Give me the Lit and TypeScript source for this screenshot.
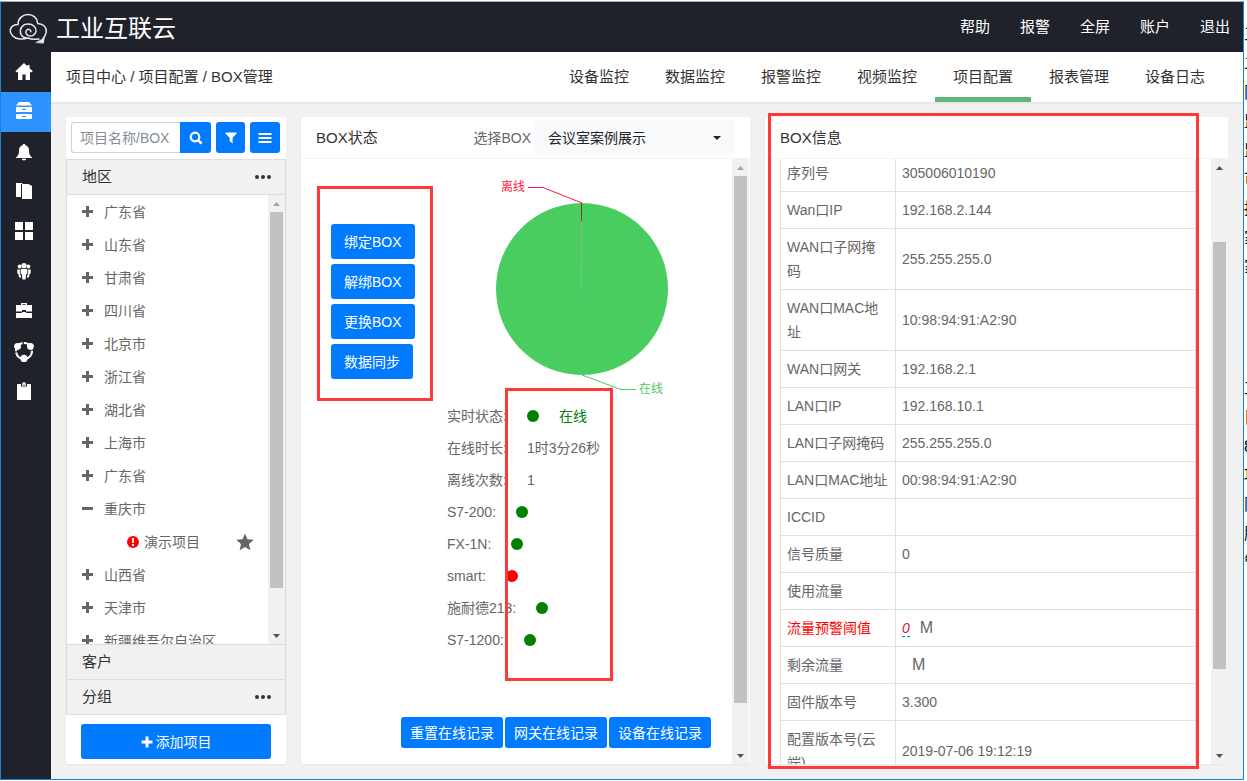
import { LitElement, html, svg, css, nothing } from "lit";
import { customElement, property } from "lit/decorators.js";
import { classMap } from "lit/directives/class-map.js";
import { styleMap } from "lit/directives/style-map.js";

const glyphs = {
  home: svg`<path d="M10 1 L1.4 9.2 L3 10.4 L4 9.8 V18 H8.4 V12.4 H11.6 V18 H16 V9.8 L17 10.4 L18.8 9.2 L15.6 6.2 V3 H13.4 V4.2 Z"/>`,
  cabinet: svg`<path d="M5 0 H15 L18 3.4 H2 Z"/><path fill-rule="evenodd" d="M2 5 H18 V10 H2 Z M8 7 V8 H12 V7 Z M2 12 H18 V17 H2 Z M8 14 V15 H12 V14 Z"/>`,
  bell: svg`<path d="M10 2 C10.9 2 11.4 2.6 11.4 3.3 C14 4 15 6.1 15 8.6 C15 12.5 16 14 18 15.4 V16 H2 V15.4 C4 14 5 12.5 5 8.6 C5 6.1 6 4 8.6 3.3 C8.6 2.6 9.1 2 10 2 Z M7.6 16.8 H12.4 C12 18 11 18.4 10 18.4 C9 18.4 8 18 7.6 16.8 Z"/>`,
  copy: svg`<path d="M2 1 H8.4 V2 H7 V15 H2 Z"/><path d="M8 2 H14.4 L18 4 V17 H8 Z"/>`,
  grid: svg`<path d="M1 0 H9 V8 H1 Z M11 0 H19 V8 H11 Z M1 10 H9 V18 H1 Z M11 10 H19 V18 H11 Z"/>`,
  users: svg`<circle cx="5.6" cy="4.6" r="2"/><circle cx="14.4" cy="4.6" r="2"/><circle cx="10" cy="3.6" r="2.6"/><path d="M6.6 7.4 C8 6.6 12 6.6 13.4 7.4 L13.2 12 L12 12.6 L11.6 17.4 H8.4 L8 12.6 L6.8 12 Z"/><path d="M3.2 7.6 L5.8 7.4 L6 12.4 L7 13.4 L7.2 15.6 H5 L4.4 12 L3.4 11.4 Z M16.8 7.6 L14.2 7.4 L14 12.4 L13 13.4 L12.8 15.6 H15 L15.6 12 L16.6 11.4 Z"/>`,
  briefcase: svg`<path fill-rule="evenodd" d="M7 1 H13 V3 H18 V9.4 H12 V8 H8 V9.4 H2 V3 H7 Z M8.4 2.2 V3 H11.6 V2.2 Z"/><path d="M2 11 H8 V10 H12 V11 H18 V16 H2 Z"/>`,
  team: svg`<circle cx="10" cy="9" r="8" fill="none" stroke="#fff" stroke-width="2.2" stroke-dasharray="11 1.4"/><circle cx="3.6" cy="4.4" r="3.3"/><circle cx="16.4" cy="4.4" r="3.3"/><circle cx="10" cy="16.4" r="3.6"/><path d="M0 3.4 H7 L5 7.4 H1.4 Z M20 3.4 H13 L15 7.4 H18.6 Z"/>`,
  clipboard: svg`<path fill-rule="evenodd" d="M3 2 H7 V4.6 H13 V2 H17 V18 H3 Z"/><path fill-rule="evenodd" d="M8 1.4 L10 0 L12 1.4 V3.8 H8 Z M9.4 1.8 V2.8 H10.6 V1.8 Z"/>`,
};

const sideItems: { icon: keyof typeof glyphs; label: string; active?: boolean }[] = [
  { icon: "home", label: "首页" },
  { icon: "cabinet", label: "项目中心", active: true },
  { icon: "bell", label: "报警" },
  { icon: "copy", label: "文档" },
  { icon: "grid", label: "应用" },
  { icon: "users", label: "用户" },
  { icon: "briefcase", label: "业务" },
  { icon: "team", label: "团队" },
  { icon: "clipboard", label: "记录" },
];

const tabs = ["设备监控", "数据监控", "报警监控", "视频监控", "项目配置", "报表管理", "设备日志"];

const regions: { name: string; open?: boolean; projects?: string[] }[] = [
  { name: "广东省" },
  { name: "山东省" },
  { name: "甘肃省" },
  { name: "四川省" },
  { name: "北京市" },
  { name: "浙江省" },
  { name: "湖北省" },
  { name: "上海市" },
  { name: "广东省" },
  { name: "重庆市", open: true, projects: ["演示项目"] },
  { name: "山西省" },
  { name: "天津市" },
  { name: "新疆维吾尔自治区" },
];

const statuses: { label: string; dot?: "ok" | "bad"; value?: string; good?: boolean }[] = [
  { label: "实时状态:", dot: "ok", value: "在线", good: true },
  { label: "在线时长:", value: "1时3分26秒" },
  { label: "离线次数:", value: "1" },
  { label: "S7-200:", dot: "ok" },
  { label: "FX-1N:", dot: "ok" },
  { label: "smart:", dot: "bad" },
  { label: "施耐德213:", dot: "ok" },
  { label: "S7-1200:", dot: "ok" },
];

const info: { name: string; value?: string; unit?: string; alert?: boolean }[] = [
  { name: "序列号", value: "305006010190" },
  { name: "Wan口IP", value: "192.168.2.144" },
  { name: "WAN口子网掩码", value: "255.255.255.0" },
  { name: "WAN口MAC地址", value: "10:98:94:91:A2:90" },
  { name: "WAN口网关", value: "192.168.2.1" },
  { name: "LAN口IP", value: "192.168.10.1" },
  { name: "LAN口子网掩码", value: "255.255.255.0" },
  { name: "LAN口MAC地址", value: "00:98:94:91:A2:90" },
  { name: "ICCID" },
  { name: "信号质量", value: "0" },
  { name: "使用流量" },
  { name: "流量预警阈值", value: "0", unit: "M", alert: true },
  { name: "剩余流量", unit: "M" },
  { name: "固件版本号", value: "3.300" },
  { name: "配置版本号(云端)", value: "2019-07-06 19:12:19" },
];

const shared = css`
  * { box-sizing: border-box; }
  button, input, select { font: inherit; margin: 0; }
  button { border: 0; padding: 0; background: none; color: inherit; cursor: pointer; }
  svg { display: block; }
  .card {
    background: #fff;
    border-radius: 2px;
    box-shadow: 0 1px 2px rgba(0, 0, 0, 0.05);
    display: flex;
    flex-direction: column;
    min-height: 0;
    min-width: 0;
    height: 100%;
  }
  .card-head {
    display: flex;
    align-items: center;
    height: 42px;
    flex: none;
    padding: 0 15px;
    border-bottom: 1px solid #f3f3f3;
    font-size: 15px;
    color: #333;
  }
  .card-title { margin: 0; font-size: 15px; font-weight: 400; }
  .card-body { display: flex; flex: 1; min-height: 0; }
  .primary { background: #007bff; color: #fff; border-radius: 3px; font-size: 14px; white-space: nowrap; }
`;

/** Vertical scroll bar; before / thumb / after are the shares of the track. */
@customElement("scroll-rail")
class ScrollRail extends LitElement {
  @property({ type: Number }) before = 0;
  @property({ type: Number }) thumb = 1;
  @property({ type: Number }) after = 0;
  static styles = css`
    :host { display: flex; flex-direction: column; flex: none; width: 17px; background: #f1f1f1; }
    .arrow { height: 17px; display: flex; align-items: center; justify-content: center; flex: none; fill: #505050; }
    .off { fill: #a3a3a3; }
    .track { flex: 1; display: flex; flex-direction: column; padding: 0 2px; }
    .thumb { background: #c1c1c1; }
  `;
  render() {
    return html`
      <div class=${classMap({ arrow: true, off: this.before === 0 })}><svg width="7" height="4"><path d="M0 4 L3.5 0 L7 4 Z" /></svg></div>
      <div class="track">
        <div style=${styleMap({ flexGrow: String(this.before) })}></div>
        <div class="thumb" style=${styleMap({ flexGrow: String(this.thumb) })}></div>
        <div style=${styleMap({ flexGrow: String(this.after) })}></div>
      </div>
      <div class="arrow"><svg width="7" height="4"><path d="M0 0 L3.5 4 L7 0 Z" /></svg></div>
    `;
  }
}

@customElement("region-panel")
class RegionPanel extends LitElement {
  static styles = [
    shared,
    css`
      :host { display: block; min-width: 0; min-height: 0; }
      .search { display: flex; padding: 5px 6px 6px 5px; flex: none; }
      .field { flex: 1; min-width: 0; height: 31px; border: 1px solid #ced4da; border-right: 0; border-radius: 3px 0 0 3px; padding: 0 8px; font-size: 14px; color: #495057; outline: 0; }
      .field::placeholder { color: #868e96; opacity: 1; }
      .tool { width: 30px; height: 31px; display: flex; align-items: center; justify-content: center; fill: #fff; margin-left: 5px; }
      .tool.joined { width: 31px; margin-left: 0; border-radius: 0 3px 3px 0; }
      .tool.narrow { width: 29px; }
      .accordion { flex: 1; min-height: 0; display: flex; flex-direction: column; border: 1px solid #ddd; border-bottom: 0; }
      .section { flex: none; display: flex; align-items: center; justify-content: space-between; height: 35px; padding: 0 14px 0 15px; background: #f1f1f1; color: #333; font-size: 15px; border-bottom: 1px solid #ddd; text-align: left; width: 100%; }
      .list { flex: 1; min-height: 0; display: flex; border-bottom: 1px solid #ddd; }
      .tree { flex: 1; min-width: 0; overflow: hidden; margin: 0; padding: 0; list-style: none; color: #666; font-size: 14px; }
      .branches { margin: 0; padding: 0; list-style: none; }
      .row { display: flex; align-items: center; height: 33px; width: 100%; padding-left: 15px; gap: 11px; white-space: nowrap; }
      .leaf { padding: 0 14px 0 60px; gap: 5px; }
      .name { flex: 1; text-align: left; }
      .foot { flex: none; padding: 9px 15px 5px; }
      .add { width: 100%; height: 35px; display: flex; align-items: center; justify-content: center; gap: 3px; fill: #fff; }
    `,
  ];
  private dots() {
    return html`<svg width="16" height="4" viewBox="0 0 16 4" fill="#333"><circle cx="2" cy="2" r="2" /><circle cx="8" cy="2" r="2" /><circle cx="14" cy="2" r="2" /></svg>`;
  }
  private mark(open?: boolean) {
    return html`<svg width="11" height="11" viewBox="0 0 11 11" fill="#666"><path d="M0 4 H11 V7 H0 Z" />${open ? nothing : svg`<path d="M4 0 H7 V11 H4 Z"/>`}</svg>`;
  }
  render() {
    return html`
      <section class="card">
        <form class="search" @submit=${(e: Event) => e.preventDefault()}>
          <input class="field" type="text" placeholder="项目名称/BOX" aria-label="项目名称/BOX" />
          <button class="primary tool joined" aria-label="搜索">
            <svg width="14" height="14" viewBox="0 0 14 14"><circle cx="6" cy="6" r="4.3" fill="none" stroke="#fff" stroke-width="2.2" /><path d="M9 9 L12.6 12.6" stroke="#fff" stroke-width="2.6" /></svg>
          </button>
          <button class="primary tool narrow" type="button" aria-label="筛选">
            <svg width="12" height="12" viewBox="0 0 12 12"><path d="M0.4 0.5 H11.6 V1.6 L7.6 5.8 V11.5 L4.6 9 V5.8 L0.4 1.6 Z" /></svg>
          </button>
          <button class="primary tool" type="button" aria-label="列表">
            <svg width="14" height="12" viewBox="0 0 14 12"><path d="M0.5 1 H13.5 V3 H0.5 Z M0.5 5 H13.5 V7 H0.5 Z M0.5 9 H13.5 V11 H0.5 Z" /></svg>
          </button>
        </form>
        <div class="accordion">
          <button class="section"><span>地区</span>${this.dots()}</button>
          <div class="list">
            <ul class="tree">
              ${regions.map(
                (r) => html`<li>
                  <button class="row">${this.mark(r.open)}<span class="name">${r.name}</span></button>
                  ${r.projects
                    ? html`<ul class="branches">
                        ${r.projects.map(
                          (p) => html`<li>
                            <button class="row leaf">
                              <svg width="12" height="12" viewBox="0 0 12 12"><circle cx="6" cy="6" r="6" fill="#f00" /><path d="M5 2 H7 L6.8 7 H5.2 Z M5 8 H7 V10 H5 Z" fill="#fff" /></svg>
                              <span class="name">${p}</span>
                              <svg width="18" height="18" viewBox="0 0 18 18" fill="#666"><path d="M9 0.4 L11.5 6.2 L17.8 6.8 L13 11 L14.4 17.2 L9 13.9 L3.6 17.2 L5 11 L0.2 6.8 L6.5 6.2 Z" /></svg>
                            </button>
                          </li>`,
                        )}
                      </ul>`
                    : nothing}
                </li>`,
              )}
            </ul>
            <scroll-rail .before=${0} .thumb=${376} .after=${39}></scroll-rail>
          </div>
          <button class="section"><span>客户</span></button>
          <button class="section"><span>分组</span>${this.dots()}</button>
        </div>
        <div class="foot">
          <button class="primary add"><svg width="12" height="12" viewBox="0 0 12 12"><path d="M0.5 4.5 H4.5 V0.5 H7.5 V4.5 H11.5 V7.5 H7.5 V11.5 H4.5 V7.5 H0.5 Z" /></svg>添加项目</button>
        </div>
      </section>
    `;
  }
}

@customElement("status-panel")
class StatusPanel extends LitElement {
  static styles = [
    shared,
    css`
      :host { display: block; min-width: 0; min-height: 0; }
      .card-title { flex: 1; }
      .card-body { padding-right: 1px; }
      .pick { display: flex; align-items: center; gap: 4px; font-size: 14px; color: #666; }
      .chooser { position: relative; display: flex; align-items: center; }
      .choice { appearance: none; width: 200px; height: 35px; border: 0; border-radius: 3px; background: #f8f9fa; color: #212529; font-size: 14px; padding: 0 13px; outline: 0; }
      .caret { position: absolute; right: 14px; pointer-events: none; }
      .content { position: relative; flex: 1; min-width: 0; overflow: hidden; display: flex; flex-direction: column; }
      .split { display: flex; }
      .actions { width: 131px; flex: none; display: flex; flex-direction: column; align-items: flex-start; gap: 5px; padding: 65px 0 0 30px; }
      .action { height: 35px; padding: 0 13px; }
      .detail { flex: 1; min-width: 0; color: #666; font-size: 14px; }
      .chart { margin: 0 auto; font-size: 12px; }
      .lines { margin: 0; padding: 0 0 0 15px; }
      .line { display: flex; align-items: center; height: 32px; gap: 20px; white-space: nowrap; }
      .value { margin: 0; display: flex; align-items: center; gap: 20px; }
      .dot { width: 12px; height: 12px; border-radius: 50%; background: #008000; }
      .dot.bad { background: #f00; }
      .good { color: #008000; }
      .records { display: flex; justify-content: flex-end; gap: 2px; padding: 61px 21px 0 0; }
      .record { height: 31px; padding: 0 9px; }
      .frame { position: absolute; border: 3px solid #ff3838; pointer-events: none; }
      .frame-actions { left: 16px; top: 27px; width: 116px; height: 215px; }
      .frame-states { left: 204px; top: 229px; width: 108px; height: 293px; }
    `,
  ];
  render() {
    return html`
      <section class="card">
        <header class="card-head">
          <h2 class="card-title">BOX状态</h2>
          <div class="pick">
            <label for="box">选择BOX</label>
            <div class="chooser">
              <select class="choice" id="box"><option>会议室案例展示</option></select>
              <svg class="caret" width="8" height="4"><path d="M0 0 H8 L4 4 Z" fill="#212529" /></svg>
            </div>
          </div>
        </header>
        <div class="card-body">
          <div class="content">
            <div class="split">
              <div class="actions">
                ${["绑定BOX", "解绑BOX", "更换BOX", "数据同步"].map((t) => html`<button class="primary action">${t}</button>`)}
              </div>
              <div class="detail">
                <svg class="chart" width="300" height="241" viewBox="0 0 300 241" role="img" aria-label="在线与离线占比">
                  <defs>
                    <linearGradient id="sliver" x1="0" y1="0" x2="0" y2="1">
                      <stop offset="0" stop-color="#a01c2c" /><stop offset=".2" stop-color="#7d4a32" /><stop offset=".22" stop-color="#8fb56c" /><stop offset="1" stop-color="#5fd074" />
                    </linearGradient>
                  </defs>
                  <circle cx="150" cy="130" r="86" fill="#4acd60" />
                  <path d="M149 44 H150 V130 H149 Z" fill="url(#sliver)" />
                  <path d="M96 28.5 H111 L150 44" fill="none" stroke="#ff1945" />
                  <path d="M150 216 L189 230.5 H204" fill="none" stroke="#4acd60" />
                  <text x="69" y="32" fill="#ff1945">离线</text>
                  <text x="207" y="234" fill="#4acd60">在线</text>
                </svg>
                <dl class="lines">
                  ${statuses.map(
                    (s) => html`<div class="line">
                      <dt>${s.label}</dt>
                      <dd class=${classMap({ value: true, good: !!s.good })}>
                        ${s.dot ? html`<span class=${classMap({ dot: true, bad: s.dot === "bad" })}></span>` : nothing}
                        ${s.value ?? nothing}
                      </dd>
                    </div>`,
                  )}
                </dl>
              </div>
            </div>
            <div class="records">
              ${["重置在线记录", "网关在线记录", "设备在线记录"].map((t) => html`<button class="primary record">${t}</button>`)}
            </div>
            <div class="frame frame-actions"></div>
            <div class="frame frame-states"></div>
          </div>
          <scroll-rail .before=${0} .thumb=${527} .after=${44}></scroll-rail>
        </div>
      </section>
    `;
  }
}

@customElement("info-panel")
class InfoPanel extends LitElement {
  static styles = [
    shared,
    css`
      :host { display: block; position: relative; min-width: 0; min-height: 0; }
      .content { flex: 1; min-width: 0; overflow: hidden; padding: 0 15px; }
      .grid { width: 100%; margin-top: -5px; border-collapse: collapse; table-layout: fixed; font-size: 14px; line-height: 24px; color: #666; }
      .key { width: 115px; }
      .cell { border: 1px solid #dee2e6; padding: 6px; text-align: left; font-weight: 400; vertical-align: middle; height: 37px; word-break: break-all; }
      .alert { color: #f00; }
      .edit { font-style: italic; color: #dd1144; text-decoration: none; border-bottom: 1px dashed #0088cc; }
      .unit { font-size: 16px; line-height: 20px; margin-left: 10px; }
      .frame { position: absolute; left: 3px; right: 29px; top: -4px; bottom: -5px; border: 3px solid #ff3838; pointer-events: none; }
    `,
  ];
  render() {
    return html`
      <section class="card">
        <header class="card-head"><h2 class="card-title">BOX信息</h2></header>
        <div class="card-body">
          <div class="content">
            <table class="grid">
              <colgroup><col class="key" /><col /></colgroup>
              <tbody>
                ${info.map(
                  (r) => html`<tr>
                    <th scope="row" class=${classMap({ cell: true, alert: !!r.alert })}>${r.name}</th>
                    <td class="cell">${r.alert ? html`<a class="edit" href="#">${r.value}</a>` : r.value ?? nothing}${r.unit ? html`<span class="unit">${r.unit}</span>` : nothing}</td>
                  </tr>`,
                )}
              </tbody>
            </table>
          </div>
          <scroll-rail .before=${66} .thumb=${427} .after=${78}></scroll-rail>
        </div>
      </section>
      <div class="frame"></div>
    `;
  }
}

@customElement("app-root")
class AppRoot extends LitElement {
  static styles = [
    shared,
    css`
      :host { box-sizing: border-box; display: flex; height: 100vh; overflow: hidden; padding-bottom: 1px; background: #fff; font-family: "Liberation Sans", "Noto Sans CJK SC", sans-serif; font-size: 15px; line-height: 20px; }
      .window { flex: 1; min-width: 0; display: flex; flex-direction: column; margin-top: 1px; border: 1px solid #1883d7; border-top-color: #a9abae; background: #f1f1f1; }
      .top { flex: none; height: 50px; display: flex; align-items: center; justify-content: space-between; background: #1f222a; color: #fff; padding: 0 13px 0 7px; }
      .brand { display: flex; align-items: center; gap: 8px; padding-top: 4px; }
      .brand-name { font-size: 24px; line-height: 36px; }
      .links { display: flex; gap: 30px; }
      .link { color: #fff; text-decoration: none; }
      .main { flex: 1; min-height: 0; display: flex; }
      .side { flex: none; width: 50px; background: #1f222a; display: flex; flex-direction: column; }
      .side-item { height: 40px; display: flex; align-items: center; padding-left: 13px; fill: #fff; }
      .side-item.active { background: #2d93ff; }
      .page { flex: 1; min-width: 0; display: flex; flex-direction: column; }
      .bar { flex: none; height: 50px; display: flex; align-items: center; justify-content: space-between; padding: 0 20px 0 15px; background: #fff; color: #333; box-shadow: 0 1px 2px rgba(0, 0, 0, 0.08); }
      .tabs { display: flex; height: 100%; }
      .tab { display: flex; align-items: center; padding: 5px 18px 0; border-bottom: 5px solid transparent; color: #333; text-decoration: none; white-space: nowrap; }
      .tab.active { border-bottom-color: #5fb878; }
      .panels { flex: 1; min-height: 0; display: grid; grid-template-columns: 220px 449fr 463fr; grid-template-rows: minmax(0, 1fr); gap: 15px; padding: 15px; }
      .behind { flex: none; width: 3px; overflow: hidden; white-space: nowrap; color: #000; font-size: 16px; line-height: 29px; padding-top: 20px; }
      .behind-line { height: 29px; }
      .behind-line.blank { height: 31px; }
    `,
  ];
  render() {
    return html`
      <div class="window">
        <header class="top">
          <div class="brand">
            <svg width="40" height="32" viewBox="0 0 40 32" fill="none" stroke="#e8e8e8" stroke-width="1.5" stroke-linecap="round">
              <path d="M31 26 C26 26.8 22 26 20 25 C15 26.6 8 26.6 4.8 23 C0 18 2.4 11.6 10 11.4 C10 5 15 1.6 20 1.6 C25 1.6 29.4 4.8 29.8 10.6 C36 11 38.8 14.6 38.2 19.4 C37.6 22.4 36.6 24 35 25.6" />
              <path d="M12.6 20.4 C11.4 15 14.8 11 20 11 C25.4 11 28.4 14.6 28 18.4 C27.4 22.2 23.6 23.8 20.4 22.6 C17.6 21.6 17 18.2 19 16.8 C20.8 15.6 23 16.8 22.8 18.8" />
              <path d="M12.6 20.4 C13.4 22.8 15.6 24.4 18.6 25" />
              <path d="M28 29.4 L36.4 25 L35.4 30 Z" fill="#e8e8e8" stroke-width=".6" />
            </svg>
            <span class="brand-name">工业互联云</span>
          </div>
          <nav class="links">${["帮助", "报警", "全屏", "账户", "退出"].map((t) => html`<a class="link" href="#">${t}</a>`)}</nav>
        </header>
        <div class="main">
          <nav class="side">
            ${sideItems.map(
              (s) => html`<a class=${classMap({ "side-item": true, active: !!s.active })} href="#" aria-label=${s.label}>
                <svg width="20" height="20" viewBox="0 0 20 20">${glyphs[s.icon]}</svg>
              </a>`,
            )}
          </nav>
          <div class="page">
            <div class="bar">
              <div>项目中心 / 项目配置 / BOX管理</div>
              <nav class="tabs">${tabs.map((t) => html`<a class=${classMap({ tab: true, active: t === "项目配置" })} href="#">${t}</a>`)}</nav>
            </div>
            <div class="panels">
              <region-panel></region-panel>
              <status-panel></status-panel>
              <info-panel></info-panel>
            </div>
          </div>
        </div>
      </div>
      <div class="behind" aria-hidden="true">
        ${["三", "二", "限", "监", "监", "可", "损", "家", "家", "", "", "", "工", "目", "8", "项", "限", "服", "管"].map((t) => html`<div class=${classMap({ "behind-line": true, blank: t === "" })}>${t}</div>`)}
      </div>
    `;
  }
}
